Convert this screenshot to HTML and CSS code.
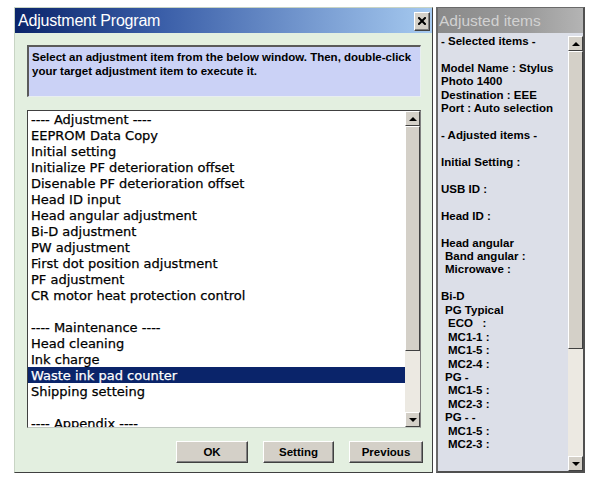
FILE: index.html
```html
<!DOCTYPE html>
<html>
<head>
<meta charset="utf-8">
<link rel="stylesheet" href="styles.css">
</head>
<body>
<div class="screen">
  <div class="dialog">
    <div class="titlebar">
      <span class="title">Adjustment Program</span>
      <button class="close" aria-label="Close"><svg width="8" height="8" viewBox="0 0 8 8"><path d="M1 1L7 7M7 1L1 7" stroke="#000" stroke-width="2" stroke-linecap="square"/></svg></button>
    </div>
    <div class="content">
      <div class="instructions">Select an adjustment item from the below window. Then, double-click your target adjustment item to execute it.</div>
      <div class="listbox">
        <div class="items">
          <div class="item">---- Adjustment ----</div>
          <div class="item">EEPROM Data Copy</div>
          <div class="item">Initial setting</div>
          <div class="item">Initialize PF deterioration offset</div>
          <div class="item">Disenable PF deterioration offset</div>
          <div class="item">Head ID input</div>
          <div class="item">Head angular adjustment</div>
          <div class="item">Bi-D adjustment</div>
          <div class="item">PW adjustment</div>
          <div class="item">First dot position adjustment</div>
          <div class="item">PF adjustment</div>
          <div class="item">CR motor heat protection control</div>
          <div class="item"></div>
          <div class="item">---- Maintenance ----</div>
          <div class="item">Head cleaning</div>
          <div class="item">Ink charge</div>
          <div class="item selected">Waste ink pad counter</div>
          <div class="item">Shipping setteing</div>
          <div class="item"></div>
          <div class="item">---- Appendix ----</div>
        </div>
        <div class="scrollbar list-sb">
          <div class="sb-btn"><span class="arrow up"></span></div>
          <div class="sb-track">
            <div class="sb-thumb list-thumb"></div>
          </div>
          <div class="sb-btn"><span class="arrow down"></span></div>
        </div>
      </div>
      <div class="buttons">
        <button class="btn btn-ok">OK</button>
        <button class="btn btn-setting">Setting</button>
        <button class="btn btn-prev">Previous</button>
      </div>
    </div>
  </div>
  <div class="panel">
    <div class="panel-head">Adjusted items</div>
    <div class="panel-body">
      <div class="info">
        <div>- Selected items -</div>
        <div>&nbsp;</div>
        <div>Model Name : Stylus</div>
        <div>Photo 1400</div>
        <div>Destination : EEE</div>
        <div>Port : Auto selection</div>
        <div>&nbsp;</div>
        <div>- Adjusted items -</div>
        <div>&nbsp;</div>
        <div>Initial Setting :</div>
        <div>&nbsp;</div>
        <div>USB ID :</div>
        <div>&nbsp;</div>
        <div>Head ID :</div>
        <div>&nbsp;</div>
        <div>Head angular</div>
        <div class="i1">Band angular :</div>
        <div class="i1">Microwave :</div>
        <div>&nbsp;</div>
        <div>Bi-D</div>
        <div class="i1">PG Typical</div>
        <div class="i2 pre">ECO   :</div>
        <div class="i2">MC1-1 :</div>
        <div class="i2">MC1-5 :</div>
        <div class="i2">MC2-4 :</div>
        <div class="i1">PG -</div>
        <div class="i2">MC1-5 :</div>
        <div class="i2">MC2-3 :</div>
        <div class="i1">PG - -</div>
        <div class="i2">MC1-5 :</div>
        <div class="i2">MC2-3 :</div>
      </div>
      <div class="scrollbar panel-sb">
        <div class="sb-btn"><span class="arrow up"></span></div>
        <div class="sb-track">
          <div class="sb-thumb panel-thumb"></div>
        </div>
        <div class="sb-btn"><span class="arrow down"></span></div>
      </div>
    </div>
  </div>
</div>
</body>
</html>
```

FILE: styles.css
```css
html, body {
  margin: 0;
  padding: 0;
  background: #ffffff;
}

body {
  font-family: "Liberation Sans", Arial, sans-serif;
  color: #000;
}

.screen {
  display: flex;
  gap: 3px;
  padding: 7px 0 0 14px;
}

/* ---------- Dialog ---------- */
.dialog {
  width: 419px;
  height: 466px;
  box-sizing: border-box;
  border: 1px solid;
  border-color: #c8d4c4 #404040 #404040 #c8d4c4;
  background: #e3efe0;
  display: flex;
  flex-direction: column;
}

.titlebar {
  height: 25px;
  flex: none;
  display: flex;
  align-items: center;
  justify-content: space-between;
  padding: 0 2px 0 3px;
  background: linear-gradient(to right, #0a246a 0%, #3a5ea8 35%, #a6caf0 100%);
}

.title {
  color: #ffffff;
  font-size: 16px;
  letter-spacing: -0.2px;
}

.close {
  width: 16px;
  height: 19px;
  padding: 0;
  margin: 1px 0 0 0;
  box-sizing: border-box;
  border: 1px solid;
  border-color: #ffffff #404040 #404040 #ffffff;
  box-shadow: inset -1px -1px 0 #808080;
  background: #d4d0c8;
  display: flex;
  align-items: center;
  justify-content: center;
}

.close svg {
  display: block;
}

.content {
  flex: 1;
  display: flex;
  flex-direction: column;
  padding: 12px 11px 0 12px;
}

.instructions {
  height: 52px;
  box-sizing: border-box;
  border: 1px solid;
  border-color: #5a5a5a #e8eef0 #e8eef0 #5a5a5a;
  border-width: 2px 1px 1px 2px;
  background: #cbd2f6;
  padding: 3px 3px 0 3px;
  font-size: 11.5px;
  font-weight: bold;
  line-height: 14px;
}

.listbox {
  margin-top: 13px;
  height: 318px;
  box-sizing: border-box;
  border: 1px solid;
  border-color: #404040 #808080 #c0c8c0 #404040;
  background: #ffffff;
  display: flex;
  overflow: hidden;
}

.items {
  flex: 1;
  overflow: hidden;
}

.item {
  height: 15px;
  padding-top: 1px;
  line-height: 16px;
  font-family: "DejaVu Sans", "Liberation Sans", sans-serif;
  font-size: 13px;
  -webkit-text-stroke: 0.25px currentColor;
  padding-left: 3px;
  white-space: nowrap;
}

.item.selected {
  background: #0a246a;
  color: #ffffff;
}

/* ---------- Scrollbars ---------- */
.scrollbar {
  width: 15px;
  flex: none;
  display: flex;
  flex-direction: column;
  background: #ece9e2;
}

.sb-btn {
  height: 15px;
  flex: none;
  box-sizing: border-box;
  border: 1px solid;
  border-color: #ffffff #404040 #404040 #ffffff;
  background: #d4d0c8;
  display: flex;
  align-items: center;
  justify-content: center;
}

.arrow {
  width: 0;
  height: 0;
  border-left: 4px solid transparent;
  border-right: 4px solid transparent;
}

.arrow.up {
  border-bottom: 4px solid #000;
}

.arrow.down {
  border-top: 4px solid #000;
}

.sb-track {
  flex: 1;
  background: #ece9e2;
}

.sb-thumb {
  box-sizing: border-box;
  border: 1px solid;
  border-color: #ffffff #404040 #404040 #ffffff;
  background: #d4d0c8;
}

.list-thumb {
  height: 225px;
}

.panel-thumb {
  height: 298px;
}

/* ---------- Buttons ---------- */
.buttons {
  margin-top: 13px;
  display: flex;
  justify-content: flex-end;
  gap: 15px;
  margin-right: -2px;
}

.btn {
  height: 22px;
  box-sizing: border-box;
  border: 1px solid;
  border-color: #ffffff #404040 #404040 #ffffff;
  box-shadow: inset -1px -1px 0 #808080;
  background: #d4d0c8;
  font-family: "Liberation Sans", Arial, sans-serif;
  font-size: 11.5px;
  font-weight: bold;
  color: #000;
  padding: 0;
}

.btn-ok { width: 72px; }
.btn-setting { width: 71px; }
.btn-prev { width: 74px; }

/* ---------- Right panel ---------- */
.panel {
  width: 149px;
  height: 466px;
  box-sizing: border-box;
  border: 1px solid;
  border-color: #6a6a6a #505050 #505050 #6a6a6a;
  border-width: 1px 2px 2px 2px;
  background: #dcdfe8;
  display: flex;
  flex-direction: column;
}

.panel-head {
  height: 25px;
  flex: none;
  background: linear-gradient(to right, #8a8a8a 0%, #9a9a9a 60%, #b4b4b4 100%);
  color: #d2d2d2;
  font-size: 15.5px;
  line-height: 25px;
  padding-left: 1px;
  white-space: nowrap;
}

.panel-body {
  flex: 1;
  display: flex;
  padding: 2px 0 0 3px;
  overflow: hidden;
}

.info {
  flex: 1;
  font-size: 11.5px;
  font-weight: bold;
  line-height: 13.43px;
  white-space: nowrap;
}

.info .i1 { padding-left: 4px; }
.info .i2 { padding-left: 7px; }
.info .pre { white-space: pre; }

.panel-sb {
  margin-top: 1px;
}
```
